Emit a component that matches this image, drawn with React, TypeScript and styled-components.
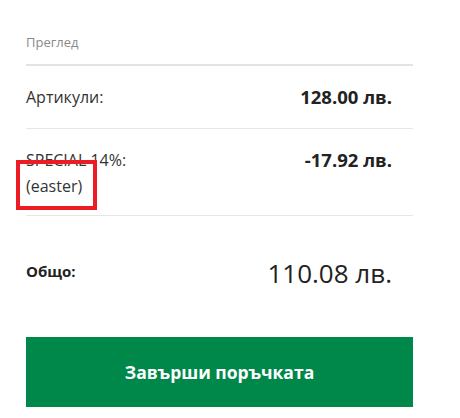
import React from "react";
import styled, { createGlobalStyle } from "styled-components";

const Global = createGlobalStyle`
  html, body { margin: 0; padding: 0; background: #fff; }
  body { font-family: "Open Sans", "Noto Sans", sans-serif; color: #222; }
`;

const Page = styled.div`
  position: relative;
  width: 460px;
  height: 418px;
  padding: 30px 47px 0 26px;
  box-sizing: border-box;
`;

const Heading = styled.div`
  font-size: 13px;
  color: #8a8a8a;
  line-height: 24px;
  padding-bottom: 10px;
  border-bottom: 2px solid #e3e3e3;
`;

const Row = styled.div<{ $pt: number; $pb: number }>`
  display: flex;
  justify-content: space-between;
  align-items: flex-start;
  padding: ${(p) => p.$pt}px 21px ${(p) => p.$pb}px 0;
  border-bottom: 1px solid #e6e6e6;
`;

const Label = styled.div`
  font-size: 16px;
  line-height: 26px;
  color: #333;
`;

const Value = styled.div`
  font-size: 18.5px;
  font-weight: 700;
  line-height: 26px;
  color: #222;
`;

const TotalRow = styled.div`
  display: flex;
  justify-content: space-between;
  align-items: flex-start;
  padding: 42px 21px 0 0;
  height: 79px;
  box-sizing: border-box;
`;

const TotalLabel = styled.div`
  font-size: 15px;
  font-weight: 700;
  line-height: 26px;
`;

const TotalValue = styled.div`
  font-size: 26px;
  line-height: 30px;
  color: #222;
`;

const Button = styled.button`
  display: block;
  width: 100%;
  height: 70px;
  margin-top: 42px;
  border: none;
  background: #00884a;
  color: #fff;
  font-family: "Open Sans", "Noto Sans", sans-serif;
  font-size: 17.5px;
  font-weight: 700;
  cursor: pointer;
`;

const Highlight = styled.div`
  position: absolute;
  left: 16px;
  top: 160px;
  width: 81px;
  height: 50px;
  border: 4px solid #ed1c24;
  box-sizing: border-box;
  pointer-events: none;
`;

export default function App() {
  return (
    <>
      <Global />
      <Page>
        <Heading>Преглед</Heading>
        <Row $pt={18} $pb={18}>
          <Label>Артикули:</Label>
          <Value>128.00 лв.</Value>
        </Row>
        <Row $pt={18} $pb={16}>
          <Label>
            SPECIAL 14%:
            <br />
            (easter)
          </Label>
          <Value>-17.92 лв.</Value>
        </Row>
        <TotalRow>
          <TotalLabel>Общо:</TotalLabel>
          <TotalValue>110.08 лв.</TotalValue>
        </TotalRow>
        <Button>Завърши поръчката</Button>
        <Highlight />
      </Page>
    </>
  );
}
